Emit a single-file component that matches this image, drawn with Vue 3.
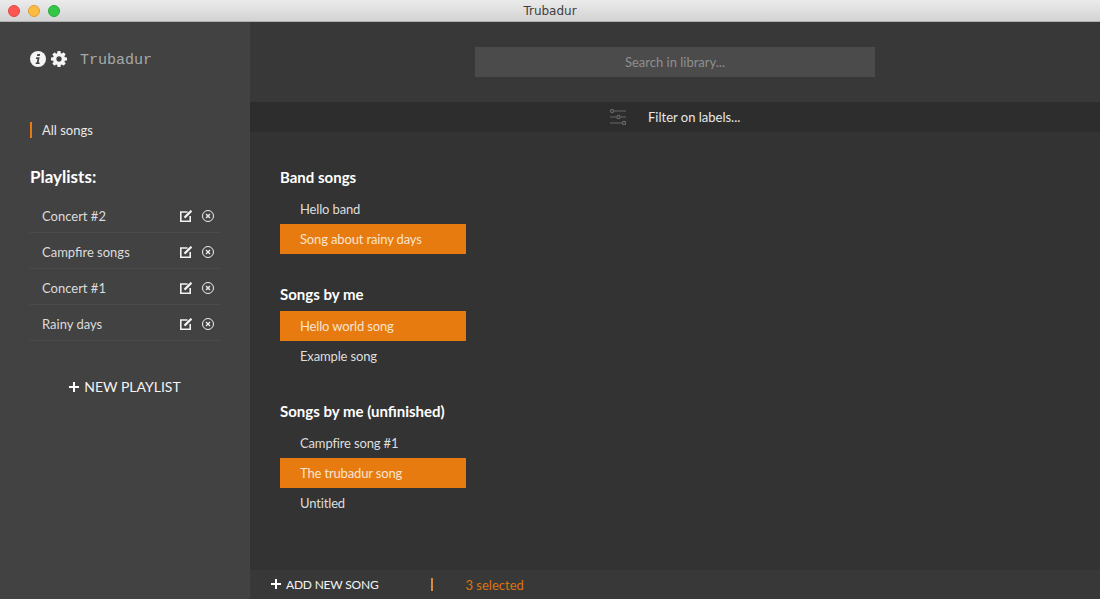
<script setup>
const playlists = ['Concert #2', 'Campfire songs', 'Concert #1', 'Rainy days']

const groups = [
  {
    name: 'Band songs',
    songs: [
      { title: 'Hello band', selected: false },
      { title: 'Song about rainy days', selected: true },
    ],
  },
  {
    name: 'Songs by me',
    songs: [
      { title: 'Hello world song', selected: true },
      { title: 'Example song', selected: false },
    ],
  },
  {
    name: 'Songs by me (unfinished)',
    songs: [
      { title: 'Campfire song #1', selected: false },
      { title: 'The trubadur song', selected: true },
      { title: 'Untitled', selected: false },
    ],
  },
]
</script>

<template>
  <div class="window">
    <header class="titlebar">
      <div class="lights">
        <span class="light light-red"></span>
        <span class="light light-yellow"></span>
        <span class="light light-green"></span>
      </div>
      <span class="window-title">Trubadur</span>
    </header>

    <div class="app">
      <aside class="sidebar">
        <div class="brand">
          <svg class="info-icon" viewBox="0 0 16 16">
            <circle cx="8" cy="8" r="8" fill="#f4f4f4" />
            <path d="M7.4 2.9h2.7l-.4 2.2H7z M6.3 6.3h3.3l-1 5.2h1v1.6H5.6l.3-1.6h.9l.7-3.6h-1.5z" fill="#424242" />
          </svg>
          <svg class="gear-icon" viewBox="128 128 1536 1536">
            <path fill="#f4f4f4" d="M1152 896q0-106-75-181t-181-75-181 75-75 181 75 181 181 75 181-75 75-181zm512-109v222q0 12-8 23t-20 13l-185 28q-19 54-39 91 35 50 107 138 10 12 10 25t-9 23q-27 37-99 108t-94 71q-12 0-26-9l-138-108q-44 23-91 38-16 136-29 186-7 28-36 28h-222q-14 0-24.5-8.5t-11.5-21.5l-28-184q-49-16-90-37l-141 107q-10 9-25 9-14 0-25-11-126-114-165-168-7-10-7-23 0-12 8-23 15-21 51-66.5t54-70.5q-27-50-41-99l-183-27q-13-2-21-12.5t-8-23.5v-222q0-12 8-23t19-13l186-28q14-46 39-92-40-57-107-138-10-12-10-24 0-10 9-23 26-36 98.5-107.5t94.5-71.5q13 0 26 10l138 107q44-23 91-38 16-136 29-186 7-28 36-28h222q14 0 24.5 8.5t11.5 21.5l28 184q49 16 90 37l142-107q9-9 24-9 13 0 25 10 129 119 165 170 7 8 7 22 0 12-8 23-15 21-51 66.5t-54 70.5q26 50 41 98l183 28q13 2 21 12.5t8 23.5z" />
          </svg>
          <span class="brand-name">Trubadur</span>
        </div>

        <div class="all-songs">All songs</div>

        <h2 class="playlists-title">Playlists:</h2>
        <ul class="playlists">
          <li v-for="item in playlists" :key="item" class="playlist">
            <span class="playlist-name">{{ item }}</span>
            <svg class="edit-icon" viewBox="0 0 12 12" fill="none" stroke="#f2f2f2">
              <path d="M10.2 6v5.2H.8V2h6.700" stroke-width="1.6" />
              <path d="M4.5 7.6 11.4.7" stroke-width="2.2" />
            </svg>
            <svg class="remove-icon" viewBox="0 0 12 12" fill="none" stroke="#f2f2f2">
              <circle cx="6" cy="6" r="5.5" />
              <path d="M4 4l4 4M8 4l-4 4" stroke-width="1.3" />
            </svg>
          </li>
        </ul>

        <div class="new-playlist">
          <svg class="plus-icon" viewBox="0 0 10 10"><path d="M4 0h2v4h4v2H6v4H4V6H0V4h4z" fill="#fff" /></svg>
          NEW PLAYLIST
        </div>
      </aside>

      <main class="main">
        <div class="search-area">
          <div class="search">Search in library...</div>
        </div>

        <div class="filter-bar">
          <svg class="filter-icon" viewBox="0 0 16 16" fill="none" stroke="#666" stroke-width="1.2">
            <path d="M4 2h12M0 8h6.500M10.500 8H16M0 14h12" />
            <circle cx="2" cy="2" r="1.600" />
            <circle cx="8.500" cy="8" r="1.600" />
            <circle cx="14" cy="14" r="1.600" />
          </svg>
          <span class="filter-label">Filter on labels...</span>
        </div>

        <div class="library">
          <section v-for="group in groups" :key="group.name" class="group">
            <h3 class="group-name">{{ group.name }}</h3>
            <div
              v-for="song in group.songs"
              :key="song.title"
              :class="['song', { 'song-selected': song.selected }]"
            >
              {{ song.title }}
            </div>
          </section>
        </div>

        <footer class="bottom-bar">
          <div class="add-song">
            <svg class="plus-icon" viewBox="0 0 10 10"><path d="M4 0h2v4h4v2H6v4H4V6H0V4h4z" fill="#fff" /></svg>
            ADD NEW SONG
          </div>
          <span class="divider"></span>
          <span class="selected-count">3 selected</span>
        </footer>
      </main>
    </div>
  </div>
</template>

<style>
html,
body {
  margin: 0;
  background: #333;
}
</style>

<style scoped>
.window {
  display: flex;
  flex-direction: column;
  height: 599px;
  overflow: hidden;
  font-family: Lato, "Liberation Sans", sans-serif;
  font-size: 13px;
  color: #e6e6e6;
}

.titlebar {
  position: relative;
  display: flex;
  flex: none;
  align-items: center;
  justify-content: center;
  box-sizing: border-box;
  height: 22px;
  background: linear-gradient(#ebebeb, #d3d3d3);
  border-bottom: 1px solid #b0b0b0;
}

.lights {
  position: absolute;
  top: 5px;
  left: 8px;
  display: flex;
  gap: 8px;
}

.light {
  box-sizing: border-box;
  width: 12px;
  height: 12px;
  border-radius: 50%;
}

.light-red {
  background: #fc5753;
  border: 1px solid #df4744;
}

.light-yellow {
  background: #fdbc40;
  border: 1px solid #de9f34;
}

.light-green {
  background: #33c748;
  border: 1px solid #27aa35;
}

.window-title {
  font-family: "DejaVu Sans", sans-serif;
  font-size: 12px;
  color: #404040;
}

.app {
  display: flex;
  flex: 1;
  min-height: 0;
}

.sidebar {
  flex: none;
  box-sizing: border-box;
  width: 250px;
  padding: 29px 30px 0 30px;
  background: #424242;
}

.brand {
  display: flex;
  align-items: center;
  height: 16px;
}

.info-icon {
  width: 16px;
  height: 16px;
}

.gear-icon {
  width: 16px;
  height: 16px;
  margin-left: 5px;
}

.brand-name {
  margin-left: 13px;
  margin-top: 2px;
  font-family: "Liberation Mono", "Courier New", monospace;
  font-size: 15px;
  color: #a8a8a8;
}

.all-songs {
  height: 16px;
  margin-top: 55px;
  padding-left: 10px;
  border-left: 2px solid #e87b0f;
  line-height: 16px;
  color: #e8e8e8;
}

.playlists-title {
  margin: 29px 0 0;
  font-size: 17px;
  font-weight: 700;
  line-height: 20px;
  color: #fff;
}

.playlists {
  margin: 10px 0 0;
  padding: 0;
  list-style: none;
}

.playlist {
  display: flex;
  align-items: center;
  box-sizing: border-box;
  height: 36px;
  padding: 2px 6px 0 12px;
  border-bottom: 1px solid #4b4b4b;
}

.playlist-name {
  flex: 1;
  color: #dcdcdc;
}

.edit-icon {
  width: 12px;
  height: 12px;
}

.remove-icon {
  width: 12px;
  height: 12px;
  margin-left: 10px;
}

.new-playlist {
  display: flex;
  align-items: center;
  justify-content: center;
  gap: 5px;
  margin-top: 37px;
  font-size: 14px;
  color: #f4f4f4;
}

.plus-icon {
  width: 10px;
  height: 10px;
}

.main {
  display: flex;
  flex: 1;
  flex-direction: column;
  min-width: 0;
  background: #333;
}

.search-area {
  display: flex;
  flex: none;
  justify-content: center;
  box-sizing: border-box;
  height: 80px;
  padding-top: 25px;
  background: #383838;
}

.search {
  width: 400px;
  height: 30px;
  background: #4b4b4b;
  line-height: 30px;
  text-align: center;
  color: #8f8f8f;
}

.filter-bar {
  display: flex;
  flex: none;
  align-items: center;
  height: 30px;
  padding-left: 360px;
  background: #2d2d2d;
}

.filter-icon {
  width: 16px;
  height: 16px;
}

.filter-label {
  margin-left: 22px;
  margin-bottom: 1px;
  color: #e8e8e8;
}

.library {
  flex: 1;
  padding: 35px 0 0 30px;
}

.group {
  width: 186px;
  margin-bottom: 30px;
}

.group-name {
  margin: 0 0 7px;
  font-size: 15px;
  font-weight: 700;
  line-height: 20px;
  white-space: nowrap;
  color: #fff;
}

.song {
  height: 30px;
  padding-left: 20px;
  line-height: 30px;
  letter-spacing: -0.15px;
  color: #dedede;
}

.song-selected {
  background: #e87b0f;
  color: #f8e4d0;
}

.bottom-bar {
  display: flex;
  flex: none;
  align-items: center;
  height: 29px;
  padding-left: 21px;
  background: #383838;
}

.add-song {
  display: flex;
  align-items: center;
  gap: 5px;
  width: 160px;
  margin-bottom: 1px;
  font-size: 12px;
  letter-spacing: -0.2px;
  color: #f4f4f4;
}

.divider {
  width: 1.5px;
  height: 13px;
  background: #d98a3c;
}

.selected-count {
  margin-left: 33px;
  color: #dd7410;
}
</style>
